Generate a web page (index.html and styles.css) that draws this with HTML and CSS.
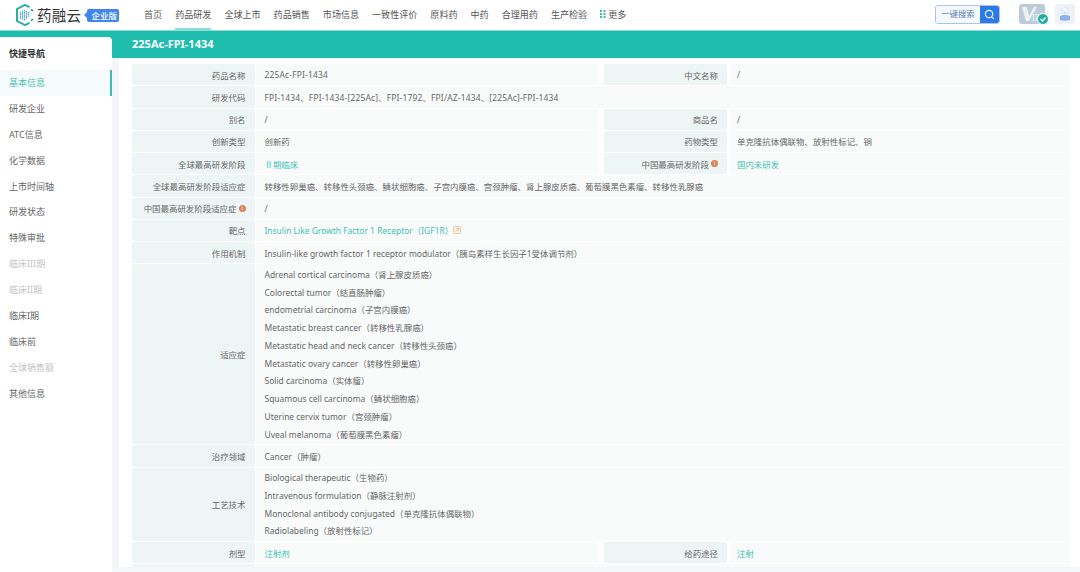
FILE: index.html
```html
<!DOCTYPE html>
<html lang="zh-CN">
<head>
<meta charset="utf-8">
<title>药融云</title>
<link rel="stylesheet" href="styles.css">
</head>
<body>
<header class="topbar">
  <div class="brand">
    <svg class="brand-mark" viewBox="0 0 20 22" width="20" height="22">
      <path d="M14.500 3.200 10 .9 2 5v12l8 4.100 4.500-2.300" fill="none" stroke="#1fae9f" stroke-width="1.900"/>
      <path d="M16 5.500 18 6.700M18 15.300 16 16.500" fill="none" stroke="#1fae9f" stroke-width="1.900"/>
      <path d="M5.500 8v7M7.500 7v9M9.500 6v10M11.500 7v8M13.500 8v5" stroke="#3f9fd8" stroke-width="1.200" stroke-dasharray="1.500 .6" fill="none"/>
    </svg>
    <span class="brand-name">药融云</span>
    <span class="brand-badge">企业版</span>
  </div>
  <nav class="nav">
    <a class="nav-item">首页</a>
    <a class="nav-item nav-active">药品研发</a>
    <a class="nav-item">全球上市</a>
    <a class="nav-item">药品销售</a>
    <a class="nav-item">市场信息</a>
    <a class="nav-item">一致性评价</a>
    <a class="nav-item">原料药</a>
    <a class="nav-item">中药</a>
    <a class="nav-item">合理用药</a>
    <a class="nav-item">生产检验</a>
    <a class="nav-item nav-more">
      <svg viewBox="0 0 6 8" width="6" height="8"><g fill="#3fbcae"><rect x="0" y="0" width="2" height="2"/><rect x="3.500" y="0" width="2" height="2"/><rect x="0" y="3" width="2" height="2"/><rect x="3.500" y="3" width="2" height="2"/><rect x="0" y="6" width="2" height="2"/><rect x="3.500" y="6" width="2" height="2"/></g></svg>
      更多
    </a>
  </nav>
  <div class="tools">
    <div class="search">
      <span class="search-label">一键搜索</span>
      <span class="search-btn">
        <svg viewBox="0 0 12 12" width="11" height="11"><circle cx="5.500" cy="5.500" r="4" fill="none" stroke="#fff" stroke-width="1.200"/><path d="M8.500 8.500 10.800 10.800" stroke="#fff" stroke-width="1.200"/></svg>
      </span>
    </div>
    <div class="vip">
      <svg viewBox="0 0 30 24" width="30" height="24">
        <rect x="0" y="0" width="26" height="20" rx="3" fill="#bccada"/>
        <path d="M3 3h5l2 9 5-9h3L10 17H7z" fill="#eef2f7"/>
        <text x="13" y="17" class="vip-text">IP</text>
        <circle cx="24" cy="15" r="5.500" fill="#1fae9f" stroke="#fff"/>
        <path d="M21.500 15l2 2 3-3.500" fill="none" stroke="#fff" stroke-width="1.300"/>
      </svg>
    </div>
    <div class="avatar">
      <svg viewBox="0 0 20 20" width="20" height="20">
        <circle cx="10" cy="7" r="3.500" fill="#f4f7fb" stroke="#cfdcf0" stroke-width=".6"/>
        <path d="M8.500 6.500h.1M11.500 6.500h.1M8.800 8.300q1.200.8 2.400 0" stroke="#9db6de" stroke-width=".7" fill="none"/>
        <path d="M5 12q5-2 10 0v4q-5 1.500-10 0z" fill="#8fb0ec"/>
      </svg>
    </div>
  </div>
</header>

<div class="workspace">
  <aside class="side">
    <h2 class="side-title">快捷导航</h2>
    <ul class="side-list">
      <li class="side-item side-active">基本信息</li>
      <li class="side-item">研发企业</li>
      <li class="side-item">ATC信息</li>
      <li class="side-item">化学数据</li>
      <li class="side-item">上市时间轴</li>
      <li class="side-item">研发状态</li>
      <li class="side-item">特殊审批</li>
      <li class="side-item side-off">临床III期</li>
      <li class="side-item side-off">临床II期</li>
      <li class="side-item">临床I期</li>
      <li class="side-item">临床前</li>
      <li class="side-item side-off">全球销售额</li>
      <li class="side-item">其他信息</li>
    </ul>
  </aside>

  <main class="main">
    <h1 class="drug-title">225Ac-FPI-1434</h1>
    <section class="panel">
      <div class="table">
        <div class="row">
          <div class="label">药品名称</div><div class="value half code">225Ac-FPI-1434</div>
          <div class="label label-2">中文名称</div><div class="value">/</div>
        </div>
        <div class="row">
          <div class="label">研发代码</div><div class="value code">FPI-1434、FPI-1434-[225Ac]、FPI-1792、FPI/AZ-1434、[225Ac]-FPI-1434</div>
        </div>
        <div class="row">
          <div class="label">别名</div><div class="value half">/</div>
          <div class="label label-2">商品名</div><div class="value">/</div>
        </div>
        <div class="row">
          <div class="label">创新类型</div><div class="value half">创新药</div>
          <div class="label label-2">药物类型</div><div class="value">单克隆抗体偶联物、放射性标记、铜</div>
        </div>
        <div class="row">
          <div class="label">全球最高研发阶段</div><div class="value half link">Ⅱ期临床</div>
          <div class="label label-2">中国最高研发阶段<span class="info">i</span></div><div class="value link">国内未研发</div>
        </div>
        <div class="row">
          <div class="label">全球最高研发阶段适应症</div><div class="value">转移性卵巢癌、转移性头颈癌、鳞状细胞癌、子宫内膜癌、宫颈肿瘤、肾上腺皮质癌、葡萄膜黑色素瘤、转移性乳腺癌</div>
        </div>
        <div class="row">
          <div class="label">中国最高研发阶段适应症<span class="info">i</span></div><div class="value">/</div>
        </div>
        <div class="row">
          <div class="label">靶点</div>
          <div class="value link">Insulin Like Growth Factor 1 Receptor（IGF1R）
            <svg class="ext" viewBox="0 0 8 8" width="8" height="8"><rect x=".5" y=".5" width="7" height="7" rx="1" fill="#fdf3ea" stroke="#eebf9d" stroke-width=".9"/><path d="M2.500 5.500 5.700 2.300M3.800 2.300h1.900v1.900" fill="none" stroke="#e6a877" stroke-width=".8"/></svg>
          </div>
        </div>
        <div class="row">
          <div class="label">作用机制</div><div class="value">Insulin-like growth factor 1 receptor modulator（胰岛素样生长因子1受体调节剂）</div>
        </div>
        <div class="row">
          <div class="label">适应症</div>
          <div class="value stack">
            <p>Adrenal cortical carcinoma（肾上腺皮质癌）</p>
            <p>Colorectal tumor（结直肠肿瘤）</p>
            <p>endometrial carcinoma（子宫内膜癌）</p>
            <p>Metastatic breast cancer（转移性乳腺癌）</p>
            <p>Metastatic head and neck cancer（转移性头颈癌）</p>
            <p>Metastatic ovary cancer（转移性卵巢癌）</p>
            <p>Solid carcinoma（实体瘤）</p>
            <p>Squamous cell carcinoma（鳞状细胞癌）</p>
            <p>Uterine cervix tumor（宫颈肿瘤）</p>
            <p>Uveal melanoma（葡萄膜黑色素瘤）</p>
          </div>
        </div>
        <div class="row">
          <div class="label">治疗领域</div><div class="value">Cancer（肿瘤）</div>
        </div>
        <div class="row">
          <div class="label">工艺技术</div>
          <div class="value stack">
            <p>Biological therapeutic（生物药）</p>
            <p>Intravenous formulation（静脉注射剂）</p>
            <p>Monoclonal antibody conjugated（单克隆抗体偶联物）</p>
            <p>Radiolabeling（放射性标记）</p>
          </div>
        </div>
        <div class="row">
          <div class="label">剂型</div><div class="value half link">注射剂</div>
          <div class="label label-2">给药途径</div><div class="value link">注射</div>
        </div>
        <div class="row">
          <div class="label"></div><div class="value"></div>
        </div>
      </div>
    </section>
  </main>
</div>
</body>
</html>
```

FILE: styles.css
```css
* { box-sizing: border-box; }
html, body { margin: 0; padding: 0; }
body {
  width: 1080px;
  height: 572px;
  overflow: hidden;
  background: #f5f6f7;
  color: #555;
  font-family: "Noto Sans", "Noto Sans CJK SC", sans-serif;
  font-size: 9px;
}

.topbar {
  display: flex;
  align-items: center;
  height: 30px;
  background: #fff;
}
.brand {
  display: flex;
  align-items: center;
  width: 144px;
  padding-left: 15px;
  flex: none;
}
.brand-mark { flex: none; }
.brand-name {
  margin-left: 2px;
  font-size: 14.500px;
  letter-spacing: .3px;
  color: #333;
  line-height: 20px;
}
.brand-badge {
  position: relative;
  margin-left: 6px;
  padding: 0 2px 0 4px;
  height: 13px;
  line-height: 13px;
  border-radius: 2px;
  background: #3f87ee;
  color: #fff;
  font-size: 8.500px;
  font-weight: 500;
  white-space: nowrap;
}
.brand-badge::before {
  content: "";
  position: absolute;
  left: -3px;
  top: 3.500px;
  border-top: 3px solid transparent;
  border-bottom: 3px solid transparent;
  border-right: 3px solid #3f87ee;
}

.nav {
  display: flex;
  align-items: stretch;
  gap: 13.050px;
  height: 30px;
  flex: none;
}
.nav-item {
  display: flex;
  align-items: center;
  gap: 2px;
  height: 30px;
  padding-bottom: 2px;
  font-size: 9.050px;
  color: #555;
  white-space: nowrap;
}
.nav-active { border-bottom: 2px solid #8fdcd3; padding-bottom: 0; }

.tools {
  display: flex;
  align-items: center;
  margin-left: auto;
  padding-right: 5px;
  padding-bottom: 2px;
}
.search {
  display: flex;
  width: 65px;
  height: 19px;
  border: 1px solid #a9c4e6;
  border-radius: 3px;
  overflow: hidden;
  margin-right: 19px;
}
.search-label {
  flex: 1;
  text-align: center;
  line-height: 16px;
  font-size: 8.400px;
  color: #5a7fb5;
  background: #f5f9fe;
  white-space: nowrap;
}
.search-btn {
  display: flex;
  align-items: center;
  justify-content: center;
  width: 19px;
  background: #2b7be6;
}
.vip {
  width: 36px;
  height: 24px;
  margin-top: 4px;
}
.vip-text { font-family: "Noto Sans", sans-serif; font-size: 8px; fill: #f6f8fb; }
.avatar {
  width: 20px;
  height: 20px;
  border-radius: 3px;
  background: #eef2f7;
}

.workspace {
  display: flex;
  height: 542px;
  background: linear-gradient(#8fdcd3 1px, #1fbdae 1px, #1fbdae 28px, #f5f6f7 28px);
}
.side {
  flex: none;
  width: 112px;
  margin-top: 7px;
  background: #fff;
  border-top-right-radius: 4px;
}
.side-title {
  margin: 0;
  padding: 10px 0 0 9px;
  height: 33px;
  font-size: 9px;
  line-height: 13px;
  font-weight: 700;
  color: #333;
}
.side-list {
  list-style: none;
  margin: 0;
  padding: 0;
}
.side-item {
  height: 25.900px;
  line-height: 25.900px;
  padding-left: 9px;
  color: #666;
  font-size: 9px;
}
.side-active {
  color: #4cc4b6;
  background: #f5fbfa;
  border-right: 2px solid #3fbcae;
}
.side-off { color: #c4c4c4; }

.main {
  flex: none;
  width: 961px;
  margin-left: 7px;
  height: 537px;
}
.drug-title {
  margin: 0;
  height: 28px;
  padding-left: 13px;
  line-height: 28px;
  font-size: 11px;
  font-weight: 700;
  color: #fff;
}
.panel {
  height: 509px;
  overflow: hidden;
  background: #fff;
  padding: 6px 10px 0 13px;
}
.table {
  display: flex;
  flex-direction: column;
  gap: 1px;
  font-size: 8.450px;
}
.row {
  display: flex;
  gap: 1px;
  min-height: 21.250px;
}
.label {
  flex: none;
  width: 122.500px;
  display: flex;
  align-items: center;
  justify-content: flex-end;
  gap: 2px;
  padding-right: 9px;
  background: #eef6f5;
  border-radius: 2px;
  color: #666;
  white-space: nowrap;
}
.label-2 {
  margin-left: 5.500px;
  width: 123px;
}
.label-2 + .value {
  margin-left: 2px;
  padding-left: 7px;
}
.value {
  flex: 1;
  display: flex;
  align-items: center;
  padding-left: 9px;
  background: #f9fbfb;
  color: #666;
  white-space: nowrap;
}
.half {
  flex: none;
  width: 342px;
}
.code { letter-spacing: .17px; }
.link { color: #3fc1b3; }
.stack {
  display: block;
  padding-top: 1.500px;
  padding-bottom: 1px;
}
.stack p {
  margin: 0;
  height: 17.750px;
  line-height: 17.750px;
}
.info {
  display: inline-block;
  width: 7px;
  height: 7px;
  border-radius: 50%;
  background: #dd8152;
  color: #fff;
  font-size: 6px;
  line-height: 7px;
  text-align: center;
}
.ext { margin-left: 0; }
```
